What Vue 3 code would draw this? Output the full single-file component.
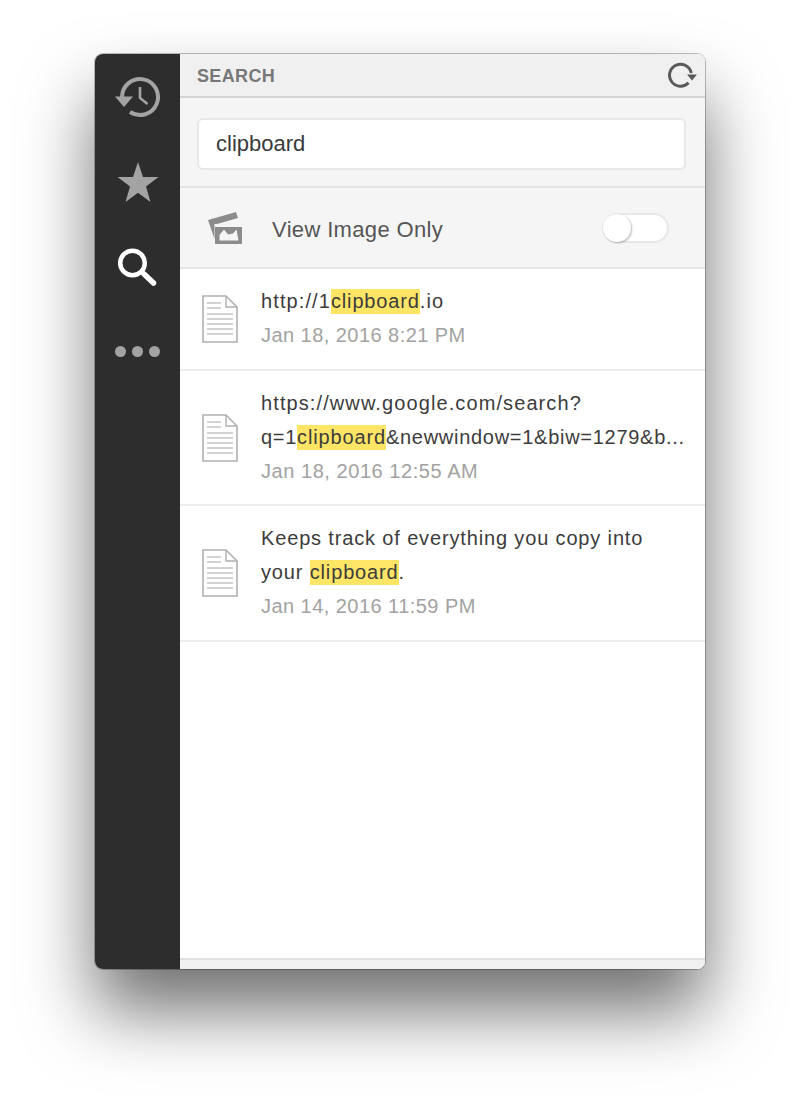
<script setup>
const rows = [
  { lines: [[['http://1'], ['clipboard', true], ['.io']]], date: 'Jan 18, 2016 8:21 PM', cls: 'r1' },
  {
    lines: [[['https://www.google.com/search?']], [['q=1'], ['clipboard', true], ['&newwindow=1&biw=1279&b...']]],
    date: 'Jan 18, 2016 12:55 AM', cls: 'r2'
  },
  {
    lines: [[['Keeps track of everything you copy into']], [['your '], ['clipboard', true], ['.']]],
    date: 'Jan 14, 2016 11:59 PM', cls: 'r3'
  }
]
</script>

<template>
  <div class="page">
    <div class="window">
      <nav class="side">
        <svg class="hist" viewBox="0 0 46 42" width="46" height="42">
          <path d="M7 21A18 18 0 1 1 15 36" fill="none" stroke="#a3a3a3" stroke-width="4"/>
          <path d="M0 20.5H18L9 31Z" fill="#a3a3a3"/>
          <path d="M25 11V22L32.5 28" fill="none" stroke="#a3a3a3" stroke-width="2.6"/>
        </svg>
        <svg class="star" viewBox="0 0 42 42" width="42" height="42">
          <path d="M21 1L26 16H41.5L29 25.5L33.5 41L21 31.8L8.5 41L13 25.5L0.5 16H16Z" fill="#a3a3a3"/>
        </svg>
        <svg class="mag" viewBox="0 0 40 40" width="40" height="40">
          <circle cx="14.5" cy="16" r="12.3" fill="none" stroke="#fff" stroke-width="4.5"/>
          <path d="M26 27L35.5 36" stroke="#fff" stroke-width="5.5" stroke-linecap="round"/>
        </svg>
        <div class="dots"><i></i><i></i><i></i></div>
      </nav>
      <main class="main">
        <header class="head">
          <span class="title">SEARCH</span>
          <svg viewBox="0 0 30 28" width="30" height="28" class="refresh">
            <path d="M24.3 12A11 11 0 1 0 21.5 21.8" fill="none" stroke="#5a5a5a" stroke-width="3"/>
            <path d="M20 13.5H30L25 19.5Z" fill="#5a5a5a"/>
          </svg>
        </header>
        <div class="search"><div class="input">clipboard</div></div>
        <div class="filter">
          <svg viewBox="0 0 36 34" width="36" height="34" class="imgicon">
            <path d="M0 9L28 1L30 7L9 13H6.5V28Z" fill="#8c8c8c"/>
            <path d="M7 16H34V33H7Z" fill="#8c8c8c"/>
            <path d="M11.5 29.5V24L16 18.5L20 23.5L25 22.5L28.5 18.5L30.5 29.5Z" fill="#f5f5f5"/>
          </svg>
          <span class="flabel">View Image Only</span>
          <div class="toggle"><div class="knob"></div></div>
        </div>
        <div v-for="r in rows" :key="r.date" class="row" :class="r.cls">
          <svg viewBox="0 0 36 48" width="36" height="48" class="doc">
            <path d="M1 1H24L35 12V47H1Z" fill="#fff" stroke="#b0b0b0" stroke-width="1.6"/>
            <path d="M24 1V12H35" fill="none" stroke="#b0b0b0" stroke-width="1.4"/>
            <path d="M5 8H19M5 13H19M5 19H31M5 24H31M5 29H31M5 34H31M5 39H31" stroke="#c4c4c4" stroke-width="1.3"/>
          </svg>
          <div class="txt">
            <div v-for="(l, i) in r.lines" :key="i" class="line">
              <template v-for="(s, j) in l" :key="j">
                <mark v-if="s[1]">{{ s[0] }}</mark>
                <span v-else>{{ s[0] }}</span>
              </template>
            </div>
            <div class="date">{{ r.date }}</div>
          </div>
        </div>
        <div class="spacer"></div>
        <div class="foot"></div>
      </main>
    </div>
  </div>
</template>

<style>
html, body { margin: 0; background: #fff; }
</style>

<style scoped>
.page {
  width: 800px;
  height: 1105px;
  padding: 54px 95px 0;
  box-sizing: border-box;
  overflow: hidden;
  font-family: "Liberation Sans", Arial, sans-serif;
}
.window {
  width: 610px;
  height: 915px;
  display: flex;
  border-radius: 8px;
  overflow: hidden;
  box-shadow: 0 42px 70px 0 rgba(0, 0, 0, .56), 0 0 0 1px rgba(0, 0, 0, .25);
}
.side {
  width: 85px;
  flex: none;
  background: #2d2d2d;
  display: flex;
  flex-direction: column;
  align-items: center;
}
.hist { margin-top: 22px; margin-left: 1px; flex: none; }
.star { margin-top: 43px; flex: none; }
.mag { margin-top: 44px; flex: none; }
.dots { display: flex; gap: 6px; margin-top: 59px; }
.dots i { width: 11px; height: 11px; border-radius: 50%; background: #a3a3a3; display: block; }
.main { flex: 1; display: flex; flex-direction: column; background: #fff; min-width: 0; }
.head {
  flex: none;
  background: #f0f0f0;
  border-bottom: 2px solid #d4d4d4;
  box-sizing: border-box;
  height: 44px;
  display: flex;
  align-items: center;
  justify-content: space-between;
  padding: 0 8px 0 17px;
}
.title { font-size: 18px; font-weight: 700; color: #777; letter-spacing: .35px; margin-top: 2px; }
.search {
  height: 90px;
  flex: none;
  box-sizing: border-box;
  background: #f5f5f5;
  border-bottom: 2px solid #e4e4e4;
  padding: 20px 19px 0 17px;
}
.input {
  height: 52px;
  box-sizing: border-box;
  background: #fff;
  border: 2px solid #e8e8e8;
  border-radius: 6px;
  padding-left: 17px;
  line-height: 48px;
  font-size: 22px;
  color: #3a3a3a;
}
.filter {
  height: 81px;
  flex: none;
  box-sizing: border-box;
  background: #f5f5f5;
  border-bottom: 2px solid #e4e4e4;
  display: flex;
  align-items: center;
  padding-left: 28px;
}
.imgicon { flex: none; }
.flabel { font-size: 22px; color: #555; margin: 4px 0 0 28px; letter-spacing: .35px; }
.toggle {
  margin-left: auto;
  margin-right: 36px;
  width: 67px;
  height: 30px;
  box-sizing: border-box;
  border: 2px solid #e8e8e8;
  border-radius: 15px;
  background: #fff;
  position: relative;
}
.knob {
  position: absolute;
  left: -1px;
  top: -1px;
  width: 28px;
  height: 28px;
  border-radius: 50%;
  background: #fff;
  box-shadow: 1px 1px 2px rgba(0, 0, 0, .28);
}
.row {
  flex: none;
  box-sizing: border-box;
  border-bottom: 2px solid #ececec;
  display: flex;
  align-items: center;
  padding-left: 22px;
  background: #fff;
}
.r1 { height: 102px; }
.r2 { height: 135px; }
.r3 { height: 136px; }
.doc { flex: none; }
.txt { margin-left: 23px; padding-bottom: 2px; font-size: 20px; color: #3c3c3c; letter-spacing: .85px; white-space: nowrap; }
.r1 .line { letter-spacing: 1.1px; }
.r2 .line:first-child { letter-spacing: 1.1px; }
.r2 .line:nth-child(2) { letter-spacing: .72px; }
.line { line-height: 34px; }
.date { line-height: 34px; color: #a2a2a2; letter-spacing: .45px; }
.r2 .date { letter-spacing: .55px; }
mark { background: #ffe566; color: inherit; display: inline-block; line-height: 25px; letter-spacing: .85px; }
.spacer { flex: 1; background: #fff; }
.foot { height: 11px; flex: none; background: #f0f0f0; border-top: 2px solid #e0e0e0; box-sizing: border-box; }
</style>
